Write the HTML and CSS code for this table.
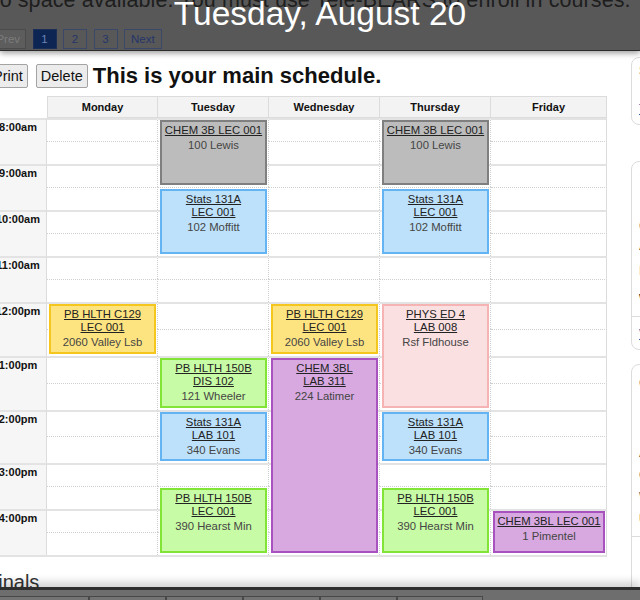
FILE: index.html
```html
<!DOCTYPE html>
<html lang="en">
<head>
<meta charset="utf-8">
<title>Schedule</title>
<link rel="stylesheet" href="styles.css">
</head>
<body>
<header class="topbar">
  <div class="topbar-inner">
    <p class="notice">No space available. You must use Tele-BEARS to enroll in courses.</p>
    <nav class="pager">
      <span class="pg off">Prev</span>
      <span class="pg on">1</span>
      <span class="pg">2</span>
      <span class="pg">3</span>
      <span class="pg">Next</span>
    </nav>
  </div>
  <h1 class="day">Tuesday, August 20</h1>
</header>

<div class="page">
  <div class="main">
    <div class="toolbar">
      <button class="btn">Print</button>
      <button class="btn del">Delete</button>
      <h2 class="title">This is your main schedule.</h2>
    </div>

    <div class="cal">
      <div class="grid">
        <div class="corner"></div>
        <div class="hd first">Monday</div>
        <div class="hd">Tuesday</div>
        <div class="hd">Wednesday</div>
        <div class="hd">Thursday</div>
        <div class="hd">Friday</div>

        <div class="tm">8:00am</div>
        <div class="s"></div><div class="s"></div><div class="s"></div><div class="s"></div><div class="s f"></div>
        <div class="s h"></div><div class="s h"></div><div class="s h"></div><div class="s h"></div><div class="s h f"></div>

        <div class="tm">9:00am</div>
        <div class="s"></div><div class="s"></div><div class="s"></div><div class="s"></div><div class="s f"></div>
        <div class="s h"></div><div class="s h"></div><div class="s h"></div><div class="s h"></div><div class="s h f"></div>

        <div class="tm">10:00am</div>
        <div class="s"></div><div class="s"></div><div class="s"></div><div class="s"></div><div class="s f"></div>
        <div class="s h"></div><div class="s h"></div><div class="s h"></div><div class="s h"></div><div class="s h f"></div>

        <div class="tm">11:00am</div>
        <div class="s"></div><div class="s"></div><div class="s"></div><div class="s"></div><div class="s f"></div>
        <div class="s h"></div><div class="s h"></div><div class="s h"></div><div class="s h"></div><div class="s h f"></div>

        <div class="tm">12:00pm</div>
        <div class="s"></div><div class="s"></div><div class="s"></div><div class="s"></div><div class="s f"></div>
        <div class="s h"></div><div class="s h"></div><div class="s h"></div><div class="s h"></div><div class="s h f"></div>

        <div class="tm">1:00pm</div>
        <div class="s"></div><div class="s"></div><div class="s"></div><div class="s"></div><div class="s f"></div>
        <div class="s h"></div><div class="s h"></div><div class="s h"></div><div class="s h"></div><div class="s h f"></div>

        <div class="tm">2:00pm</div>
        <div class="s"></div><div class="s"></div><div class="s"></div><div class="s"></div><div class="s f"></div>
        <div class="s h"></div><div class="s h"></div><div class="s h"></div><div class="s h"></div><div class="s h f"></div>

        <div class="tm">3:00pm</div>
        <div class="s"></div><div class="s"></div><div class="s"></div><div class="s"></div><div class="s f"></div>
        <div class="s h"></div><div class="s h"></div><div class="s h"></div><div class="s h"></div><div class="s h f"></div>

        <div class="tm">4:00pm</div>
        <div class="s"></div><div class="s"></div><div class="s"></div><div class="s"></div><div class="s f"></div>
        <div class="s h"></div><div class="s h"></div><div class="s h"></div><div class="s h"></div><div class="s h f"></div>
      </div>

      <div class="events">
        <div class="ev gray tue" style="grid-row: 2 / 5"><a href="#">CHEM&nbsp;3B LEC&nbsp;001</a><span class="loc">100 Lewis</span></div>
        <div class="ev gray thu" style="grid-row: 2 / 5"><a href="#">CHEM&nbsp;3B LEC&nbsp;001</a><span class="loc">100 Lewis</span></div>
        <div class="ev blue tue" style="grid-row: 5 / 8"><a href="#">Stats&nbsp;131A LEC&nbsp;001</a><span class="loc">102 Moffitt</span></div>
        <div class="ev blue thu" style="grid-row: 5 / 8"><a href="#">Stats&nbsp;131A LEC&nbsp;001</a><span class="loc">102 Moffitt</span></div>
        <div class="ev yellow mon" style="grid-row: 10 / 12"><a href="#">PB&nbsp;HLTH&nbsp;C129 LEC&nbsp;001</a><span class="loc">2060 Valley Lsb</span></div>
        <div class="ev yellow wed" style="grid-row: 10 / 12"><a href="#">PB&nbsp;HLTH&nbsp;C129 LEC&nbsp;001</a><span class="loc">2060 Valley Lsb</span></div>
        <div class="ev pink thu" style="grid-row: 10 / 14"><a href="#">PHYS&nbsp;ED&nbsp;4 LAB&nbsp;008</a><span class="loc">Rsf Fldhouse</span></div>
        <div class="ev green tue" style="grid-row: 12 / 14"><a href="#">PB&nbsp;HLTH&nbsp;150B DIS&nbsp;102</a><span class="loc">121 Wheeler</span></div>
        <div class="ev purple wed" style="grid-row: 12 / 20"><a href="#">CHEM&nbsp;3BL LAB&nbsp;311</a><span class="loc">224 Latimer</span></div>
        <div class="ev blue tue" style="grid-row: 14 / 16"><a href="#">Stats&nbsp;131A LAB&nbsp;101</a><span class="loc">340 Evans</span></div>
        <div class="ev blue thu" style="grid-row: 14 / 16"><a href="#">Stats&nbsp;131A LAB&nbsp;101</a><span class="loc">340 Evans</span></div>
        <div class="ev green tue" style="grid-row: 17 / 20"><a href="#">PB&nbsp;HLTH&nbsp;150B LEC&nbsp;001</a><span class="loc">390 Hearst Min</span></div>
        <div class="ev green thu" style="grid-row: 17 / 20"><a href="#">PB&nbsp;HLTH&nbsp;150B LEC&nbsp;001</a><span class="loc">390 Hearst Min</span></div>
        <div class="ev purple fri" style="grid-row: 18 / 20"><a href="#">CHEM&nbsp;3BL LEC&nbsp;001</a><span class="loc">1 Pimentel</span></div>
      </div>
    </div>

    <h2 class="finals">Finals</h2>
  </div>

  <aside class="side">
    <div class="box box1">
      <p class="ln dark l1">Schedule options</p>
      <a class="ln link" href="#">Tele-BEARS</a>
    </div>
    <div class="box box2">
      <p class="ln grey l2a">Current units</p>
      <p class="ln dark bold l2b">Add or drop</p>
      <p class="ln grey l2c">Enrolled</p>
      <p class="ln dark l2d">Waitlisted</p>
      <div class="sep"></div>
      <a class="ln link" href="#">View all</a>
    </div>
    <div class="box box3">
      <p class="ln grey l3a">Course search</p>
      <p class="ln dark bold l3b">Available</p>
      <p class="ln grey l3c">Open seats</p>
      <p class="ln grey l3c">Waitlist</p>
      <p class="ln dark l3c">Units</p>
      <div class="sep"></div>
    </div>
  </aside>
</div>

<footer class="tabbar">
  <span class="tab t1"></span>
  <span class="tab"></span>
  <span class="tab"></span>
  <span class="tab"></span>
  <span class="tab"></span>
  <span class="tab t6"></span>
</footer>
</body>
</html>
```

FILE: styles.css
```css
html, body {
  margin: 0;
  padding: 0;
  height: 600px;
  overflow: hidden;
  background: #fff;
  font-family: "Liberation Sans", Arial, sans-serif;
}

/* ---------- top bar ---------- */
.topbar {
  position: relative;
  z-index: 2;
  height: 50px;
  background: #585858;
  border-bottom: 1px solid #2c2c2c;
  box-shadow: 0 2px 6px rgba(0, 0, 0, 0.4);
  overflow: hidden;
}
.topbar-inner {
  margin-left: -14px;
}
.notice {
  margin: -12px 0 0 -2px;
  font-size: 21.5px;
  line-height: 25px;
  color: #1e1e1e;
  white-space: nowrap;
  letter-spacing: 0.1px;
}
.pager {
  display: flex;
  gap: 6.5px;
  margin: 16px 0 0 4.4px;
}
.pg {
  height: 20px;
  min-width: 24px;
  padding: 0 6px;
  box-sizing: border-box;
  border: 1px solid #3b4768;
  font-size: 11.5px;
  line-height: 18px;
  text-align: center;
  color: #24356a;
}
.pg.off {
  padding: 0 5px;
  border-color: #4b4b4b;
  background: #5d5d5d;
  color: #7c7c7c;
}
.pg.on {
  background: #0d2552;
  border-color: #1b2e58;
  color: #6a84b8;
}
.day {
  position: absolute;
  top: -3px;
  left: 0;
  right: 0;
  margin: 0;
  text-align: center;
  font-size: 33.5px;
  font-weight: normal;
  line-height: 1;
  color: #fff;
}

/* ---------- page ---------- */
.page {
  display: flex;
  align-items: flex-start;
  margin-left: -14px;
}
.main {
  flex: none;
  width: 621px;
}

.toolbar {
  display: flex;
  align-items: center;
  height: 24px;
  margin-top: 13px;
  padding-left: 2px;
}
.btn {
  height: 24px;
  margin: 0 8px 0 0;
  padding: 0 4px;
  font-family: "Liberation Sans", Arial, sans-serif;
  font-size: 14.5px;
  color: #111;
  background: #ececec;
  border: 1px solid #a3a3a3;
  border-radius: 2px;
}
.btn.del {
  margin-right: 5px;
}
.title {
  margin: 0;
  font-size: 22px;
  line-height: 24px;
  font-weight: bold;
  color: #111;
  white-space: nowrap;
}

/* ---------- calendar ---------- */
.cal {
  display: grid;
  margin-top: 8px;
}
.grid,
.events {
  grid-area: 1 / 1;
  display: grid;
  grid-template-columns: 61px 111px 111px 111px 111px 116px;
  grid-template-rows: 22px 23px 23px 23px 23px 23px 23px 23px 23px 27px 27px 27px 27px 26px 27px 23px 23px 23px 23px;
}
.grid {
  border-bottom: 2px solid #e3e3e3;
}
.corner {
  background: #fff;
}
.hd {
  display: flex;
  align-items: center;
  justify-content: center;
  background: #f3f3f3;
  border: 1px solid #dcdcdc;
  border-left: none;
  font-size: 11px;
  font-weight: bold;
  color: #111;
}
.hd.first {
  border-left: 1px solid #dcdcdc;
}
.tm {
  grid-row: span 2;
  background: #f6f6f6;
  border-top: 2px solid #e3e3e3;
  border-right: 1px solid #dcdcdc;
  padding: 1px 0 0 4px;
  font-size: 11px;
  line-height: 13px;
  font-weight: bold;
  text-align: center;
  color: #111;
}
.s {
  border-top: 2px solid #e3e3e3;
  border-right: 1px dotted #cfcfcf;
}
.s.h {
  border-top: 1px dotted #cfcfcf;
}
.s.f {
  border-right: 1px solid #dcdcdc;
}

.mon { grid-column: 2; }
.tue { grid-column: 3; }
.wed { grid-column: 4; }
.thu { grid-column: 5; }
.fri { grid-column: 6; }

.ev {
  margin: 2px;
  padding: 2px 1px 0;
  border: 2px solid;
  text-align: center;
  font-size: 11.3px;
  line-height: 12.7px;
  overflow: hidden;
}
.ev a {
  color: #222;
  text-decoration: underline;
}
.ev .loc {
  display: block;
  margin-top: 2.7px;
  color: #454545;
}
.gray   { background: #bcbcbc; border-color: #7f7f7f; }
.blue   { background: #bde1fb; border-color: #64b4f3; }
.yellow { background: #fee480; border-color: #f5c61e; }
.green  { background: #c8fba5; border-color: #82e437; }
.purple { background: #d7a9e0; border-color: #a852c0; }
.pink   { background: #fbe0e1; border-color: #f5b3b3; }

.finals {
  margin: 13.4px 0 0;
  font-size: 20px;
  line-height: 24px;
  font-weight: normal;
  color: #333;
}

/* ---------- side panel ---------- */
.side {
  flex: none;
  width: 200px;
  margin: 6px 0 0 24px;
  display: flex;
  flex-direction: column;
}
.box {
  box-sizing: border-box;
  border: 1px solid #dcdcdc;
  border-radius: 8px;
  padding: 0 8px 0 7px;
  font-size: 12px;
  line-height: 14px;
}
.box1 {
  height: 68px;
  padding-top: 6px;
}
.box2 {
  height: 189px;
  margin-top: 36px;
  padding-top: 57px;
}
.box3 {
  height: 260px;
  margin-top: 14px;
  padding-top: 11px;
}
.ln {
  display: block;
  margin: 0;
  white-space: nowrap;
}
.l1 { margin-bottom: 24px; }
.l2a { margin-bottom: 6px; }
.l2b { margin-bottom: 11px; }
.l2c { margin-bottom: 14px; }
.l3a { margin-bottom: 56px; }
.l3b, .l3c { margin-bottom: 8px; }
.dark { color: #222; }
.grey { color: #666; }
.bold { font-weight: bold; }
.link { color: #2a5db0; text-decoration: underline; }
.sep {
  margin: 10px -8px 10px -7px;
  border-top: 1px solid #dcdcdc;
}

/* ---------- bottom tab bar ---------- */
.tabbar {
  position: fixed;
  left: 0;
  right: 0;
  bottom: 0;
  z-index: 3;
  height: 4px;
  padding-top: 6px;
  display: flex;
  background: #6e6e6e;
  border-top: 3px solid #2e2e2e;
  box-shadow: 0 -5px 8px rgba(0, 0, 0, 0.18);
}
.tab {
  flex: none;
  width: 75px;
  height: 4px;
  border: 1px solid #484848;
  border-bottom: none;
  background: #747474;
}
.tab.t1 {
  width: 88px;
  margin-left: -1px;
}
.tab.t6 {
  width: 84px;
}
```
